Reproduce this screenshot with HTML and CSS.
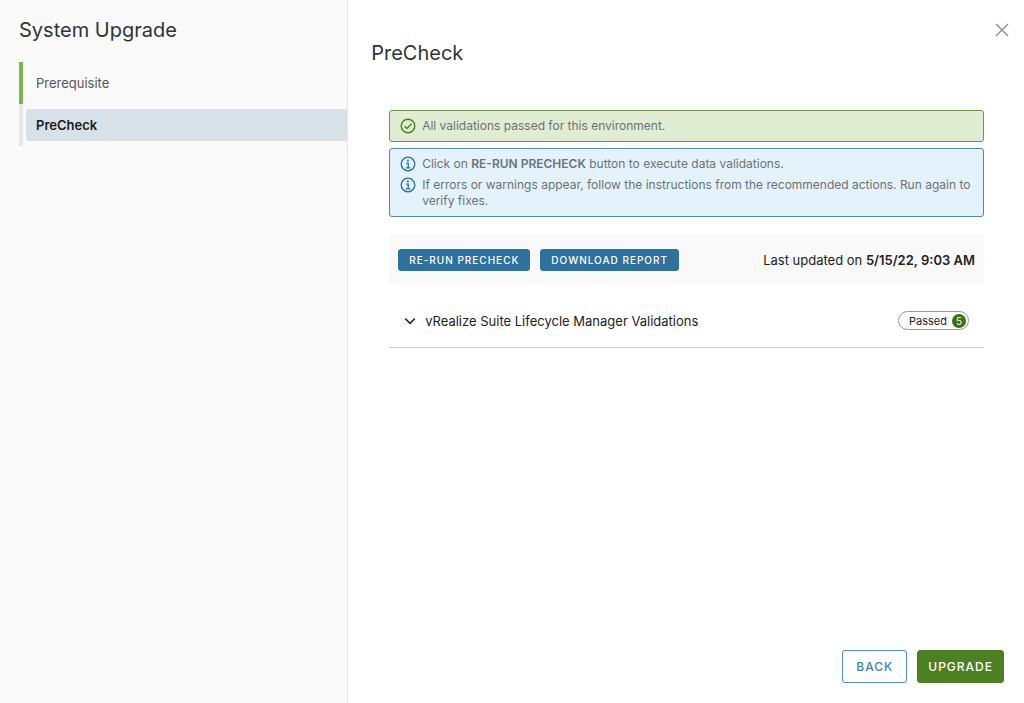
FILE: index.html
```
<!DOCTYPE html>
<html lang="en">

<head>
    <title>System Upgrade</title>
    <meta charset="utf-8" />
    <meta name="viewport" content="width=device-width, initial-scale=1">
    <link rel="stylesheet" href="styles.css">
</head>

<body>
    <div class="wizard">
        <aside class="sidebar">
            <h1 class="title">System Upgrade</h1>
            <nav class="steps" aria-label="Upgrade steps">
                <div class="step done"><button type="button">Prerequisite</button></div>
                <div class="step active"><button type="button" aria-current="step">PreCheck</button></div>
            </nav>
        </aside>

        <main class="main">
            <button type="button" class="close" aria-label="Close">
                <svg width="14" height="14" viewBox="0 0 14 14" fill="none" stroke="#8c8c8c" stroke-width="1.3">
                    <path d="M1 1l12 12M13 1L1 13" />
                </svg>
            </button>
            <h2 class="title">PreCheck</h2>

            <div class="content">
                <div class="alert success">
                    <div class="alert-item">
                        <svg class="icon" viewBox="0 0 16 16" fill="none" stroke="currentColor" stroke-width="1.4">
                            <circle cx="8" cy="8" r="6.8" />
                            <path d="M4.6 8.2l2.4 2.4 4.5-4.8" />
                        </svg>
                        <span>All validations passed for this environment.</span>
                    </div>
                </div>
                <div class="alert info">
                    <div class="alert-item">
                        <svg class="icon" viewBox="0 0 16 16" fill="none" stroke="currentColor" stroke-width="1.3">
                            <circle cx="8" cy="8" r="6.8" />
                            <circle cx="7.9" cy="4.5" r="1.1" fill="currentColor" stroke="none" />
                            <path d="M6.2 7.1h2v4.6M5.9 11.9h4.4" />
                        </svg>
                        <span>Click on <b>RE-RUN PRECHECK</b> button to execute data validations.</span>
                    </div>
                    <div class="alert-item">
                        <svg class="icon" viewBox="0 0 16 16" fill="none" stroke="currentColor" stroke-width="1.3">
                            <circle cx="8" cy="8" r="6.8" />
                            <circle cx="7.9" cy="4.5" r="1.1" fill="currentColor" stroke="none" />
                            <path d="M6.2 7.1h2v4.6M5.9 11.9h4.4" />
                        </svg>
                        <span>If errors or warnings appear, follow the instructions from the recommended actions. Run again to verify fixes.</span>
                    </div>
                </div>

                <div class="toolbar">
                    <button type="button" class="btn btn-sm">RE-RUN PRECHECK</button>
                    <button type="button" class="btn btn-sm">DOWNLOAD REPORT</button>
                    <span class="updated">Last updated on <b>5/15/22, 9:03 AM</b></span>
                </div>

                <div class="group">
                    <button type="button" class="group-toggle" aria-expanded="false">
                        <svg width="12" height="8" viewBox="0 0 12 8" fill="none" stroke="currentColor" stroke-width="1.6">
                            <path d="M1.2 1.5L6 6.3l4.8-4.8" />
                        </svg>
                        <span>vRealize Suite Lifecycle Manager Validations</span>
                    </button>
                    <span class="label">Passed <span class="badge">5</span></span>
                </div>
            </div>

            <footer class="footer">
                <button type="button" class="btn btn-outline">BACK</button>
                <button type="button" class="btn btn-success">UPGRADE</button>
            </footer>
        </main>
    </div>
</body>

</html>
```
FILE: styles.css
```
* {
    box-sizing: border-box;
}

body {
    margin: 0;
    background-color: #fff;
    color: #222;
    font-family: Inter, "Open Sans", sans-serif;
    font-size: 13px;
    line-height: 16px;
}

button {
    font-family: inherit;
    cursor: pointer;
}

b {
    font-weight: 600;
}

.wizard {
    display: flex;
    min-height: 100vh;
}

/* left side */
.sidebar {
    flex: 0 0 34%;
    padding: 18px 0 0 19px;
    background-color: #fafafa;
    border-right: 1px solid #e6e6e6;
}

.title {
    margin: 0;
    font-size: 20px;
    font-weight: 400;
    line-height: 24px;
    color: #333;
}

.steps {
    margin-top: 20px;
}

.step {
    padding: 5px 0 5px 3px;
    border-left: 4px solid #e8e8e8;
}

.step.done {
    border-left-color: #7ab648;
}

.step button {
    display: block;
    width: 100%;
    height: 32px;
    padding: 0 10px;
    border: none;
    border-radius: 3px 0 0 3px;
    background: none;
    color: #565656;
    font-size: 13px;
    text-align: left;
}

.step.active button {
    background-color: #d9e1e8;
    color: #1b1b1b;
    font-weight: 600;
}

/* right side */
.main {
    position: relative;
    flex: 1;
    display: flex;
    flex-direction: column;
    min-width: 0;
    padding: 41px 20px 20px 23px;
}

.close {
    position: absolute;
    top: 20px;
    right: 12px;
    display: flex;
    padding: 3px;
    border: none;
    background: none;
}

.content {
    flex: 1;
    padding: 45px 20px 0 18px;
}

.alert {
    display: flex;
    flex-direction: column;
    gap: 5px;
    padding: 7px 8px 7px 10px;
    border: 1px solid;
    border-radius: 3px;
    font-size: 12px;
}

.alert.success {
    margin-bottom: 6px;
    background-color: #e1edd2;
    border-color: #6a9a48;
    color: #4a8021;
}

.alert.info {
    background-color: #e4f3fb;
    border-color: #5288ad;
    color: #2a6c9c;
}

.alert-item {
    display: flex;
    gap: 6px;
}

.alert-item span {
    color: #6b7275;
}

.icon {
    flex: none;
    width: 16px;
    height: 16px;
}

.toolbar {
    display: flex;
    align-items: center;
    gap: 10px;
    height: 49px;
    margin-top: 18px;
    padding: 0 9px;
    background-color: #f9f9f9;
}

.updated {
    margin-left: auto;
    color: #222;
}

.btn {
    border: 1px solid #2f709f;
    border-radius: 3px;
    background-color: #2f709f;
    color: #fff;
    font-weight: 500;
    letter-spacing: 1px;
}

.btn-sm {
    height: 22px;
    padding: 0 10px;
    font-size: 10px;
}

.group {
    display: flex;
    align-items: center;
    justify-content: space-between;
    height: 64px;
    padding: 10px 15px 0;
    border-bottom: 1px solid #ccc;
}

.group-toggle {
    display: flex;
    align-items: center;
    gap: 9px;
    padding: 0;
    border: none;
    background: none;
    color: #222;
    font-size: 13px;
}

.label {
    display: flex;
    align-items: center;
    gap: 5px;
    height: 19px;
    padding: 0 2px 0 10px;
    border: 1px solid #999;
    border-radius: 10px;
    font-size: 11px;
}

.badge {
    width: 14px;
    height: 14px;
    border-radius: 50%;
    background-color: #3c7014;
    color: #fff;
    font-size: 10px;
    line-height: 14px;
    text-align: center;
}

.footer {
    display: flex;
    justify-content: flex-end;
    gap: 10px;
}

.footer .btn {
    height: 33px;
    padding: 0 10px;
    font-size: 12px;
}

.footer .btn-outline {
    padding: 0 13px;
    background-color: #fff;
    border-color: #4d8fc0;
    color: #3c84b8;
}

.footer .btn-success {
    background-color: #4d8023;
    border-color: #4d8023;
}
```
